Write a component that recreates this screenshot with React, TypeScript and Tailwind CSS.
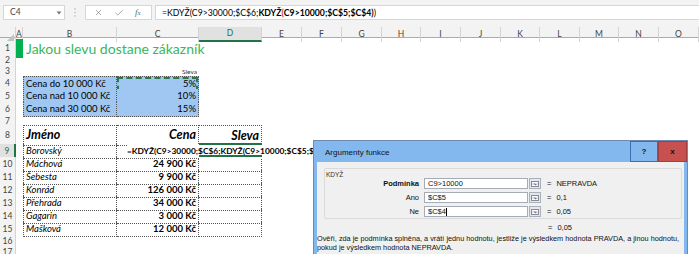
import { Check, X } from "lucide-react";
import type { ReactNode } from "react";

const letters = ["A", "B", "C", "D", "E", "F", "G", "H", "I", "J", "K", "L", "M", "N", "O"];

function Blank() {
  return (
    <>
      {Array.from({ length: 11 }).map((_, i) => (
        <div key={i} />
      ))}
    </>
  );
}

function Row({
  n,
  h,
  active,
  children,
}: {
  n: number;
  h: string;
  active?: boolean;
  children?: ReactNode;
}) {
  return (
    <div
      className={`grid grid-cols-[16px_7px_94px_82px_63px_40px_40px_40px_39px_40px_40px_39px_40px_39px_40px_40px] ${h}`}
    >
      {active ? (
        <div className="flex items-center justify-center border-b border-r-2 border-b-[#d4d4d4] border-r-[#217346] bg-[#e1e1e1] text-[8.5px] text-[#217346]">
          {n}
        </div>
      ) : (
        <div className="flex items-center justify-center border-b border-r border-[#d4d4d4] bg-[#f3f3f3] text-[8.5px] text-[#444]">
          {n}
        </div>
      )}
      {children ?? (
        <>
          <div />
          <div />
          <div />
          <div />
        </>
      )}
      <Blank />
    </div>
  );
}

const blueB =
  "flex items-center bg-[#9fc7f2] border-l border-r border-b border-dotted border-[#555] px-[2px] text-[9.5px]";
const blueC =
  "relative flex items-center justify-end bg-[#9fc7f2] border-r border-b border-dotted border-[#555] px-[2px] text-[9.5px]";
const tB =
  "flex items-center border-l border-r border-b border-dotted border-[#555] px-[2px] text-[9.5px] italic";
const tC =
  "flex items-center justify-end border-r border-b border-dotted border-[#555] px-[2px] text-[9.5px] font-bold";
const tD = "border-r border-b border-dotted border-[#555]";

const people: [string, string][] = [
  ["Máchová", "24 900 Kč"],
  ["Šebesta", "9 900 Kč"],
  ["Konrád", "126 000 Kč"],
  ["Přehrada", "34 000 Kč"],
  ["Gagarin", "3 000 Kč"],
  ["Mašková", "12 000 Kč"],
];

function CollapseBtn() {
  return (
    <div className="ml-[1px] flex h-[11px] w-[12px] items-center justify-center border border-[#a9b1bb] bg-[#e4e8ee]">
      <svg width="8" height="6" viewBox="0 0 8 6">
        <rect x="0.5" y="0.5" width="7" height="5" fill="#fff" stroke="#7d8ea3" />
        <line x1="1" y1="3" x2="7" y2="3" stroke="#b7c3d2" />
        <path d="M3 2 L6 4 L4 4.2 Z" fill="#d0342c" />
      </svg>
    </div>
  );
}

function Arg({
  label,
  value,
  result,
  bold,
  caret,
}: {
  label: string;
  value: string;
  result: string;
  bold?: boolean;
  caret?: boolean;
}) {
  return (
    <div className="flex h-[11px] items-center">
      <div className={`w-[94px] text-right text-[7.5px] ${bold ? "font-bold" : ""}`}>{label}</div>
      <div className="ml-[5px] flex h-[11px] w-[104px] items-center border border-[#a5acb5] bg-white pl-[3px] text-[7.5px]">
        {value}
        {caret && <span className="ml-[0.5px] h-[8px] w-px bg-black" />}
      </div>
      <CollapseBtn />
      <span className="ml-[6px] text-[7.5px]">=</span>
      <span className="ml-[5px] text-[7.5px]">{result}</span>
    </div>
  );
}

export default function App() {
  return (
    <div className="relative h-[254px] w-[699px] overflow-hidden bg-white font-['Lato',sans-serif] text-black">
      {/* formula bar */}
      <div className="flex h-[27px] items-start bg-[#f3f3f3] pt-[5px]">
        <div className="ml-[3px] flex h-[15px] w-[62px] items-center border border-[#d6d6d6] bg-white pl-[6px] text-[8.5px] text-[#444]">
          C4
          <svg className="ml-auto mr-[2px]" width="6" height="4" viewBox="0 0 6 4">
            <path d="M0.5 0.5 L5.5 0.5 L3 3.5 Z" fill="#777" />
          </svg>
        </div>
        <div className="flex w-[20px] justify-center pt-[3px]">
          <svg width="2" height="9" viewBox="0 0 2 9">
            <circle cx="1" cy="1" r="0.7" fill="#aaa" />
            <circle cx="1" cy="4.5" r="0.7" fill="#aaa" />
            <circle cx="1" cy="8" r="0.7" fill="#aaa" />
          </svg>
        </div>
        <div className="flex h-[15px] w-[67px] items-center border border-[#d6d6d6] bg-white">
          <X className="ml-[8px] h-[9px] w-[9px] text-[#777]" strokeWidth={1.6} />
          <Check className="ml-[11px] h-[10px] w-[10px] text-[#777]" strokeWidth={1.6} />
          <span className="ml-[11px] font-['Liberation_Serif',serif] text-[9px] italic text-[#4a7a4a]">
            f<span className="text-[7px]">x</span>
          </span>
        </div>
        <div className="ml-[3px] flex h-[15px] flex-1 items-center whitespace-nowrap border border-r-0 border-[#d6d6d6] bg-white pl-[6px] text-[8.7px]">
          =KDYŽ(C9&gt;30000;$C$6;<span className="font-bold">KDYŽ</span>
          <span className="font-bold text-[#e03030]">(</span>
          <span className="font-bold">C9&gt;10000;$C$5;$C$4)</span>)
        </div>
      </div>

      {/* column headers */}
      <div className="grid h-[11px] grid-cols-[16px_7px_94px_82px_63px_40px_40px_40px_39px_40px_40px_39px_40px_39px_40px_40px] border-b border-[#ababab] bg-[#f3f3f3] text-[8.5px] text-[#444]">
        <div className="relative border-r border-[#d4d4d4]">
          <svg className="absolute bottom-[1px] right-[1px]" width="7" height="7" viewBox="0 0 7 7">
            <path d="M7 0 L7 7 L0 7 Z" fill="#c2c2c2" />
          </svg>
        </div>
        {letters.map((l) =>
          l === "D" ? (
            <div
              key={l}
              className="flex items-center justify-center border-b-2 border-r border-b-[#217346] border-r-[#d4d4d4] bg-[#e1e1e1] text-[#217346]"
            >
              {l}
            </div>
          ) : (
            <div key={l} className="flex items-center justify-center border-r border-[#d4d4d4]">
              {l}
            </div>
          ),
        )}
      </div>

      <Row n={1} h="h-[16px]">
        <div className="flex py-[1px]">
          <div className="h-full w-full bg-[#00b050]" />
        </div>
        <div className="flex items-center whitespace-nowrap pl-[3px] text-[14px] text-[#3ab65c]">
          Jakou slevu dostane zákazník
        </div>
        <div />
        <div />
      </Row>
      <Row n={2} h="h-[11px]" />
      <Row n={3} h="h-[11px]">
        <div />
        <div />
        <div className="flex items-center justify-end pr-[2px] text-[6.5px] text-[#333]">Sleva</div>
        <div />
      </Row>
      <Row n={4} h="h-[13px]">
        <div />
        <div className={`${blueB} border-t`}>Cena do 10 000 Kč</div>
        <div className={`${blueC} border-t`}>
          5%
          <div className="absolute inset-0 border-2 border-dashed border-[#2b7a44]" />
        </div>
        <div />
      </Row>
      <Row n={5} h="h-[13px]">
        <div />
        <div className={blueB}>Cena nad 10 000 Kč</div>
        <div className={blueC}>10%</div>
        <div />
      </Row>
      <Row n={6} h="h-[13px]">
        <div />
        <div className={blueB}>Cena nad 30 000 Kč</div>
        <div className={blueC}>15%</div>
        <div />
      </Row>
      <Row n={7} h="h-[10px]" />
      <Row n={8} h="h-[19px]">
        <div />
        <div className={`${tB} border-t text-[12.5px] font-bold`}>Jméno</div>
        <div className={`${tC} border-t text-[12.5px] italic`}>Cena</div>
        <div className="flex items-center justify-end border-r border-t border-dotted border-[#555] px-[2px] text-[12.5px] font-bold italic">
          Sleva
        </div>
      </Row>
      <Row n={9} h="h-[13px]" active>
        <div />
        <div className={tB}>Borovský</div>
        <div className={`${tC} relative`}>
          <div className="absolute left-[10px] top-0 z-10 flex h-full w-[186px] items-center overflow-hidden whitespace-nowrap bg-white text-[8.4px] font-bold">
            =KDYŽ(C9&gt;30000;$C$6;KDYŽ(C9&gt;10000;$C$5;$C$4))
          </div>
        </div>
        <div className="relative">
          <div className="absolute -top-[1px] left-0 right-0 z-20 h-[14px] border-y-2 border-[#217346]" />
        </div>
      </Row>
      {people.map(([name, price], i) => (
        <Row key={name} n={10 + i} h="h-[13px]">
          <div />
          <div className={tB}>{name}</div>
          <div className={tC}>{price}</div>
          <div className={tD} />
        </Row>
      ))}
      <Row n={16} h="h-[11px]" />
      <Row n={17} h="h-[11px]" />

      {/* dialog */}
      <div className="absolute left-[313px] top-[140px] z-30 h-[130px] w-[375px] border border-[#6b8bb0] bg-[#83b8ef] font-['Liberation_Sans',sans-serif] text-[#111]">
        <div className="flex h-[21px] items-start">
          <span className="ml-[11px] mt-[6px] text-[8px]">Argumenty funkce</span>
          <div className="ml-auto flex">
            <div className="flex h-[21px] w-[28px] items-center justify-center border border-[#3d6fae] text-[8px] font-bold">
              ?
            </div>
            <div className="flex h-[21px] w-[29px] items-center justify-center border border-[#a43d3d] bg-[#c75050] text-[8px] font-bold">
              x
            </div>
          </div>
        </div>
        <div className="mx-[3px] h-[110px] bg-[#f0f0f0] pt-[6px]">
          <div className="relative ml-[7px] h-[51px] w-[358px] rounded-[2px] border border-[#dadada] pt-[9px]">
            <span className="absolute left-[1px] top-[1px] text-[6.5px] text-[#333]">KDYŽ</span>
            <div className="flex flex-col gap-[3px]">
              <Arg label="Podmínka" value="C9>10000" result="NEPRAVDA" bold />
              <Arg label="Ano" value="$C$5" result="0,1" />
              <Arg label="Ne" value="$C$4" result="0,05" caret />
            </div>
          </div>
          <div className="ml-[231px] mt-[4px] flex h-[10px] items-center text-[7.5px]">
            <span>=</span>
            <span className="ml-[5px]">0,05</span>
          </div>
          <div className="mt-[1px] text-[7.3px] leading-[9px]">
            Ověří, zda je podmínka splněna, a vrátí jednu hodnotu, jestliže je výsledkem hodnota PRAVDA, a jinou
            hodnotu,
            <br />
            pokud je výsledkem hodnota NEPRAVDA.
          </div>
        </div>
      </div>
    </div>
  );
}
